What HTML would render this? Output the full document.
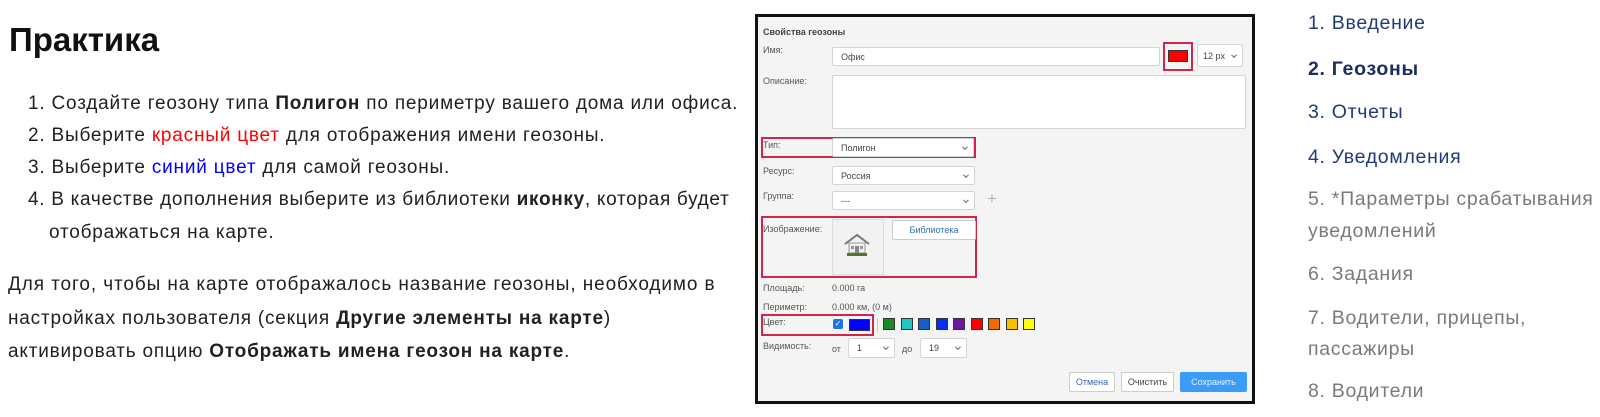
<!DOCTYPE html>
<html><head><meta charset="utf-8"><style>
*{margin:0;padding:0;box-sizing:border-box}
body{width:1600px;height:417px;background:#fff;position:relative;overflow:hidden;font-family:"Liberation Sans",sans-serif;color:#212121}
.a{position:absolute;white-space:nowrap}
.t{font-size:19px;line-height:20px;letter-spacing:0.8px}
h1{position:absolute;left:9px;top:21px;font-size:33px;font-weight:bold;color:#111}
.n{font-size:19.5px;line-height:20px;letter-spacing:0.7px;color:#213a7a;left:1308px}
.g{color:#7a7a7a}
.dlg{position:absolute;left:755px;top:14px;width:500px;height:390px;border:3px solid #111;background:#f4f4f4}
.d{position:absolute;font-size:9px;color:#555;white-space:nowrap;font-family:"Liberation Sans",sans-serif}
.in{position:absolute;background:#fff;border:1px solid #d4d4d4;border-radius:2px;font-size:9px;color:#444;padding-left:8px;display:flex;align-items:center}
.ar{position:absolute;right:6px;top:50%;width:4px;height:4px;border-right:1px solid #666;border-bottom:1px solid #666;transform:translateY(-70%) rotate(45deg)}
.hl{position:absolute;border:2px solid #d0264e}
.sw{position:absolute;top:318px;width:12px;height:12px;border:1px solid #333}
.btn{position:absolute;top:372px;height:20px;background:#fff;border:1px solid #ccc;border-radius:2px;font-size:9px;color:#3366aa;display:flex;align-items:center;justify-content:center}
</style></head><body>
<h1>Практика</h1>
<div class="a t" style="left:28px;top:94px">1. Создайте геозону типа <b>Полигон</b> по периметру вашего дома или офиса.</div>
<div class="a t" style="left:28px;top:126px">2. Выберите <span style="color:#f00">красный цвет</span> для отображения имени геозоны.</div>
<div class="a t" style="left:28px;top:158px">3. Выберите <span style="color:#00f">синий цвет</span> для самой геозоны.</div>
<div class="a t" style="left:28px;top:190px;letter-spacing:0.7px">4. В качестве дополнения выберите из библиотеки <b>иконку</b>, которая будет</div>
<div class="a t" style="left:49px;top:223px">отображаться на карте.</div>
<div class="a t" style="left:8px;top:275px;letter-spacing:0.9px">Для того, чтобы на карте отображалось название геозоны, необходимо в</div>
<div class="a t" style="left:8px;top:309px">настройках пользователя (секция <b>Другие элементы на карте</b>)</div>
<div class="a t" style="left:8px;top:342px">активировать опцию <b>Отображать имена геозон на карте</b>.</div>

<div class="dlg"></div>
<div class="d" style="left:763px;top:27px;font-weight:bold;color:#444">Свойства геозоны</div>
<div class="d" style="left:763px;top:45px">Имя:</div>
<div class="in" style="left:832px;top:47px;width:328px;height:19px">Офис</div>
<div class="hl" style="left:1163px;top:42px;width:30px;height:29px"></div>
<div style="position:absolute;left:1168px;top:50px;width:20px;height:12px;background:#f00;border:1px solid #333"></div>
<div class="in" style="left:1197px;top:44px;width:46px;height:23px;padding-left:5px">12 px<span class="ar"></span></div>
<div class="d" style="left:763px;top:76px">Описание:</div>
<div class="in" style="left:832px;top:75px;width:414px;height:54px"></div>
<div class="hl" style="left:761px;top:137px;width:215px;height:21px"></div>
<div class="d" style="left:763px;top:140px">Тип:</div>
<div class="in" style="left:832px;top:138px;width:142px;height:19px">Полигон<span class="ar"></span></div>
<div class="d" style="left:763px;top:166px">Ресурс:</div>
<div class="in" style="left:832px;top:166px;width:143px;height:19px">Россия<span class="ar"></span></div>
<div class="d" style="left:763px;top:191px">Группа:</div>
<div class="in" style="left:832px;top:191px;width:143px;height:19px">---<span class="ar"></span></div>
<div class="d" style="left:987px;top:189px;font-size:17px;color:#bbb">+</div>
<div class="hl" style="left:761px;top:216px;width:216px;height:62px"></div>
<div class="d" style="left:763px;top:224px">Изображение:</div>
<div style="position:absolute;left:832px;top:219px;width:52px;height:56px;border:1px solid #ddd;background:#f2f2f2"></div>
<svg class="a" style="left:843px;top:232px" width="28" height="26" viewBox="0 0 28 26"><path d="M2 12 L14 3 L26 12" fill="none" stroke="#777" stroke-width="2"/><rect x="6" y="11" width="16" height="10" fill="#eee" stroke="#999"/><rect x="12" y="14" width="4" height="7" fill="#888"/><rect x="8" y="14" width="3" height="3" fill="#999"/><rect x="17" y="14" width="3" height="3" fill="#999"/><rect x="4" y="21" width="20" height="3" fill="#4a7a2a"/></svg>
<div class="btn" style="left:892px;top:220px;width:84px;height:20px;color:#2f6db5">Библиотека</div>
<div class="d" style="left:763px;top:283px">Площадь:</div>
<div class="d" style="left:832px;top:283px">0.000 га</div>
<div class="d" style="left:763px;top:302px">Периметр:</div>
<div class="d" style="left:832px;top:302px">0.000 км, (0 м)</div>
<div class="hl" style="left:761px;top:314px;width:113px;height:22px"></div>
<div class="d" style="left:763px;top:317px">Цвет:</div>
<div style="position:absolute;left:833px;top:319px;width:10px;height:10px;background:#1a73e8;border-radius:2px;color:#fff;font-size:8px;line-height:10px;text-align:center">✓</div>
<div style="position:absolute;left:849px;top:319px;width:21px;height:12px;background:#00f;border:1px solid #333"></div>
<div style="position:absolute;left:877px;top:318px;width:1px;height:14px;background:#ccc"></div>
<div class="sw" style="left:883px;background:#1a8a2a"></div>
<div class="sw" style="left:901px;background:#22c4c4"></div>
<div class="sw" style="left:918px;background:#1560c0"></div>
<div class="sw" style="left:936px;background:#0a2ef0"></div>
<div class="sw" style="left:953px;background:#6a1aa0"></div>
<div class="sw" style="left:971px;background:#f00"></div>
<div class="sw" style="left:988px;background:#f06a00"></div>
<div class="sw" style="left:1006px;background:#f8c000"></div>
<div class="sw" style="left:1023px;background:#ffff00"></div>
<div class="d" style="left:763px;top:341px">Видимость:</div>
<div class="d" style="left:832px;top:344px">от</div>
<div class="in" style="left:848px;top:338px;width:47px;height:20px">1<span class="ar"></span></div>
<div class="d" style="left:902px;top:344px">до</div>
<div class="in" style="left:920px;top:338px;width:47px;height:20px">19<span class="ar"></span></div>
<div class="btn" style="left:1069px;width:46px">Отмена</div>
<div class="btn" style="left:1121px;width:53px;color:#444">Очистить</div>
<div class="btn" style="left:1180px;width:67px;background:#3b9cf5;border-color:#3b9cf5;color:#e8f2ff">Сохранить</div>

<div class="a n" style="top:13px">1. Введение</div>
<div class="a n" style="top:59px;font-weight:bold;color:#1c2c5c">2. Геозоны</div>
<div class="a n" style="top:102px">3. Отчеты</div>
<div class="a n" style="top:147px">4. Уведомления</div>
<div class="a n g" style="top:189px">5. *Параметры срабатывания</div>
<div class="a n g" style="top:221px">уведомлений</div>
<div class="a n g" style="top:264px">6. Задания</div>
<div class="a n g" style="top:308px">7. Водители, прицепы,</div>
<div class="a n g" style="top:339px">пассажиры</div>
<div class="a n g" style="top:381px">8. Водители</div>
</body></html>
